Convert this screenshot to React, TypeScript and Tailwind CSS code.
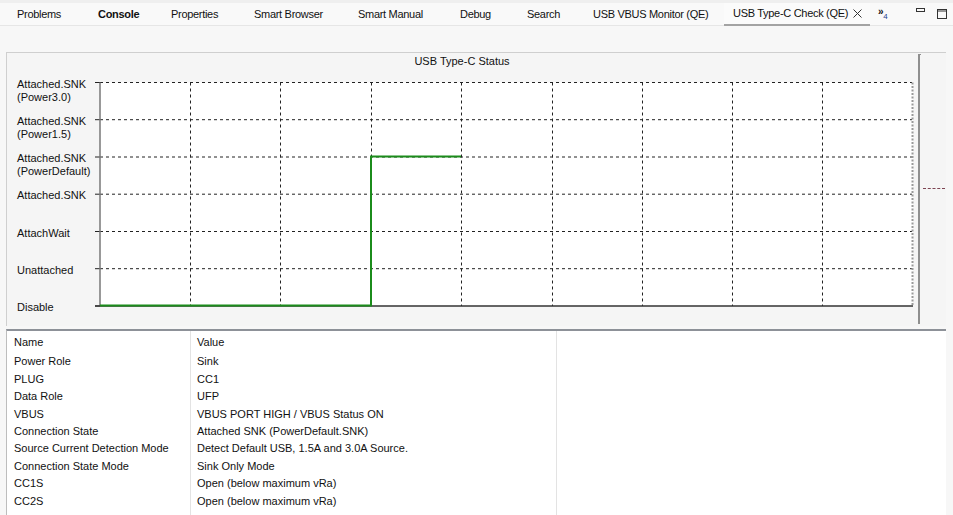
import React from "react";

const tabs = [
  { label: "Problems", w: "w-[81px]" },
  { label: "Console", w: "w-[73px]", bold: true },
  { label: "Properties", w: "w-[83px]" },
  { label: "Smart Browser", w: "w-[104px]" },
  { label: "Smart Manual", w: "w-[102px]" },
  { label: "Debug", w: "w-[67px]" },
  { label: "Search", w: "w-[66px]" },
  { label: "USB VBUS Monitor (QE)", w: "w-[148px]" },
];

const rows: [string, string][] = [
  ["Power Role", "Sink"],
  ["PLUG", "CC1"],
  ["Data Role", "UFP"],
  ["VBUS", "VBUS PORT HIGH / VBUS Status ON"],
  ["Connection State", "Attached SNK (PowerDefault.SNK)"],
  ["Source Current Detection Mode", "Detect Default USB, 1.5A and 3.0A Source."],
  ["Connection State Mode", "Sink Only Mode"],
  ["CC1S", "Open (below maximum vRa)"],
  ["CC2S", "Open (below maximum vRa)"],
];

// y positions of the state levels, top to bottom
const levels = [82.5, 119.7, 157, 194.2, 231.5, 268.7, 306];
const labels: string[][] = [
  ["Attached.SNK", "(Power3.0)"],
  ["Attached.SNK", "(Power1.5)"],
  ["Attached.SNK", "(PowerDefault)"],
  ["Attached.SNK"],
  ["AttachWait"],
  ["Unattached"],
  ["Disable"],
];
const cols = [190, 280, 371, 461, 552, 642, 732, 822];

function StatusChart() {
  return (
    <svg className="block" width={940} height={274} viewBox="6 52 940 274">
      <text x={462} y={61} textAnchor="middle" dominantBaseline="central" fontSize={11} fill="#111">
        USB Type-C Status
      </text>
      <rect x={100} y={82.5} width={813} height={223.5} fill="#fff" />
      {levels.slice(0, 6).map((y) => (
        <line key={y} x1={100} x2={912} y1={y} y2={y} stroke="#222" strokeDasharray="3 3" strokeWidth={1} />
      ))}
      {cols.map((x) => (
        <line key={x} x1={x + 0.5} x2={x + 0.5} y1={82.5} y2={306} stroke="#222" strokeDasharray="3 3" strokeWidth={1} />
      ))}
      <line x1={912.5} x2={912.5} y1={82.5} y2={306} stroke="#999" strokeDasharray="2 1.5" strokeWidth={2} />
      {levels.map((y) => (
        <line key={"t" + y} x1={95} x2={100} y1={y} y2={y} stroke="#222" strokeWidth={1} />
      ))}
      <line x1={100} x2={100} y1={82.5} y2={306} stroke="#777" strokeWidth={1.5} />
      <line x1={95} x2={913} y1={306} y2={306} stroke="#333" strokeWidth={1.5} />
      <polyline points="100,305.5 371,305.5 371,156.5 461,156.5" fill="none" stroke="#1b8c1b" strokeWidth={2} />
      {labels.map((lines, i) =>
        lines.map((t, j) => (
          <text key={i + "-" + j} x={17} y={levels[i] + 1 + j * 13} dominantBaseline="central" fontSize={11} fill="#111">
            {t}
          </text>
        ))
      )}
    </svg>
  );
}

export default function App() {
  return (
    <div className="w-[953px] h-[515px] overflow-hidden bg-[#f7f7f7] font-['Liberation_Sans',Arial,sans-serif] text-[11px] text-[#111]">
      {/* tab bar */}
      <div className="flex h-[26px] border-t-[3px] border-[#efefef] bg-[#f9f9f9] border-b border-b-[#e6e6e6] whitespace-nowrap tracking-[-0.3px]">
        {tabs.map((t) => (
          <div key={t.label} className={`${t.w} shrink-0 flex items-center pl-[17px] ${t.bold ? "font-bold" : ""}`}>
            {t.label}
          </div>
        ))}
        <div className="w-[146px] shrink-0 flex items-center pl-[9px] bg-[#fbfbfb] border-b-2 border-[#a3a3a3] -mb-[1px]">
          <span>USB Type-C Check (QE)</span>
          <svg className="ml-auto mr-[8px]" width="9" height="9" viewBox="0 0 9 9">
            <path d="M0.5 0.5 L8.5 8.5 M8.5 0.5 L0.5 8.5" stroke="#333" strokeWidth="1" />
          </svg>
        </div>
        <div className="w-[43px] shrink-0 flex items-center pl-[8px] leading-none">
          <span className="text-[10px] font-bold -mt-[4px]">»</span>
          <span className="text-[8px] text-[#1f3f8f] mt-[6px]">4</span>
        </div>
        <div className="flex items-center gap-[12px] pl-[3px]">
          <svg width="9" height="5" viewBox="0 0 9 5" className="-mt-[7px]">
            <rect x="0.5" y="0.5" width="8" height="3" fill="none" stroke="#333" strokeWidth="1" />
          </svg>
          <svg width="10" height="10" viewBox="0 0 10 10">
            <rect x="0.5" y="0.5" width="9" height="9" fill="none" stroke="#333" strokeWidth="1" />
            <line x1="0" x2="10" y1="2" y2="2" stroke="#333" strokeWidth="1" />
          </svg>
        </div>
      </div>

      {/* chart panel */}
      <div className="mt-[26px] ml-[6px] w-[940px] h-[274px] border-l border-t border-[#cfcfcf] bg-[#f5f5f5] relative">
        <div className="absolute left-[-1px] top-[-1px]">
          <StatusChart />
        </div>
        <div className="absolute left-[911px] top-[1px] w-[3px] h-[270px] border-l-2 border-[#8f8f8f] border-t border-t-[#8f8f8f]" />
        <div className="absolute left-[916px] top-[135px] w-[22px] h-[1px] border-t border-dashed border-[#7d4552]" />
      </div>

      {/* properties table */}
      <div className="mt-[3px] ml-[6px] w-[940px] h-[200px] bg-white border-l border-[#bdbdbd] border-t-2 border-t-[#8d9198]">
        <div className="grid grid-cols-[184px_366px_1fr] h-full">
          <div className="border-r border-[#e3e3e3]">
            <div className="h-[22px] flex items-center pl-[7px]">Name</div>
            {rows.map(([n]) => (
              <div key={n} className="h-[17.4px] flex items-center pl-[7px]">{n}</div>
            ))}
          </div>
          <div className="border-r border-[#e3e3e3]">
            <div className="h-[22px] flex items-center pl-[6px]">Value</div>
            {rows.map(([n, v]) => (
              <div key={n} className="h-[17.4px] flex items-center pl-[6px]">{v}</div>
            ))}
          </div>
          <div />
        </div>
      </div>
    </div>
  );
}
